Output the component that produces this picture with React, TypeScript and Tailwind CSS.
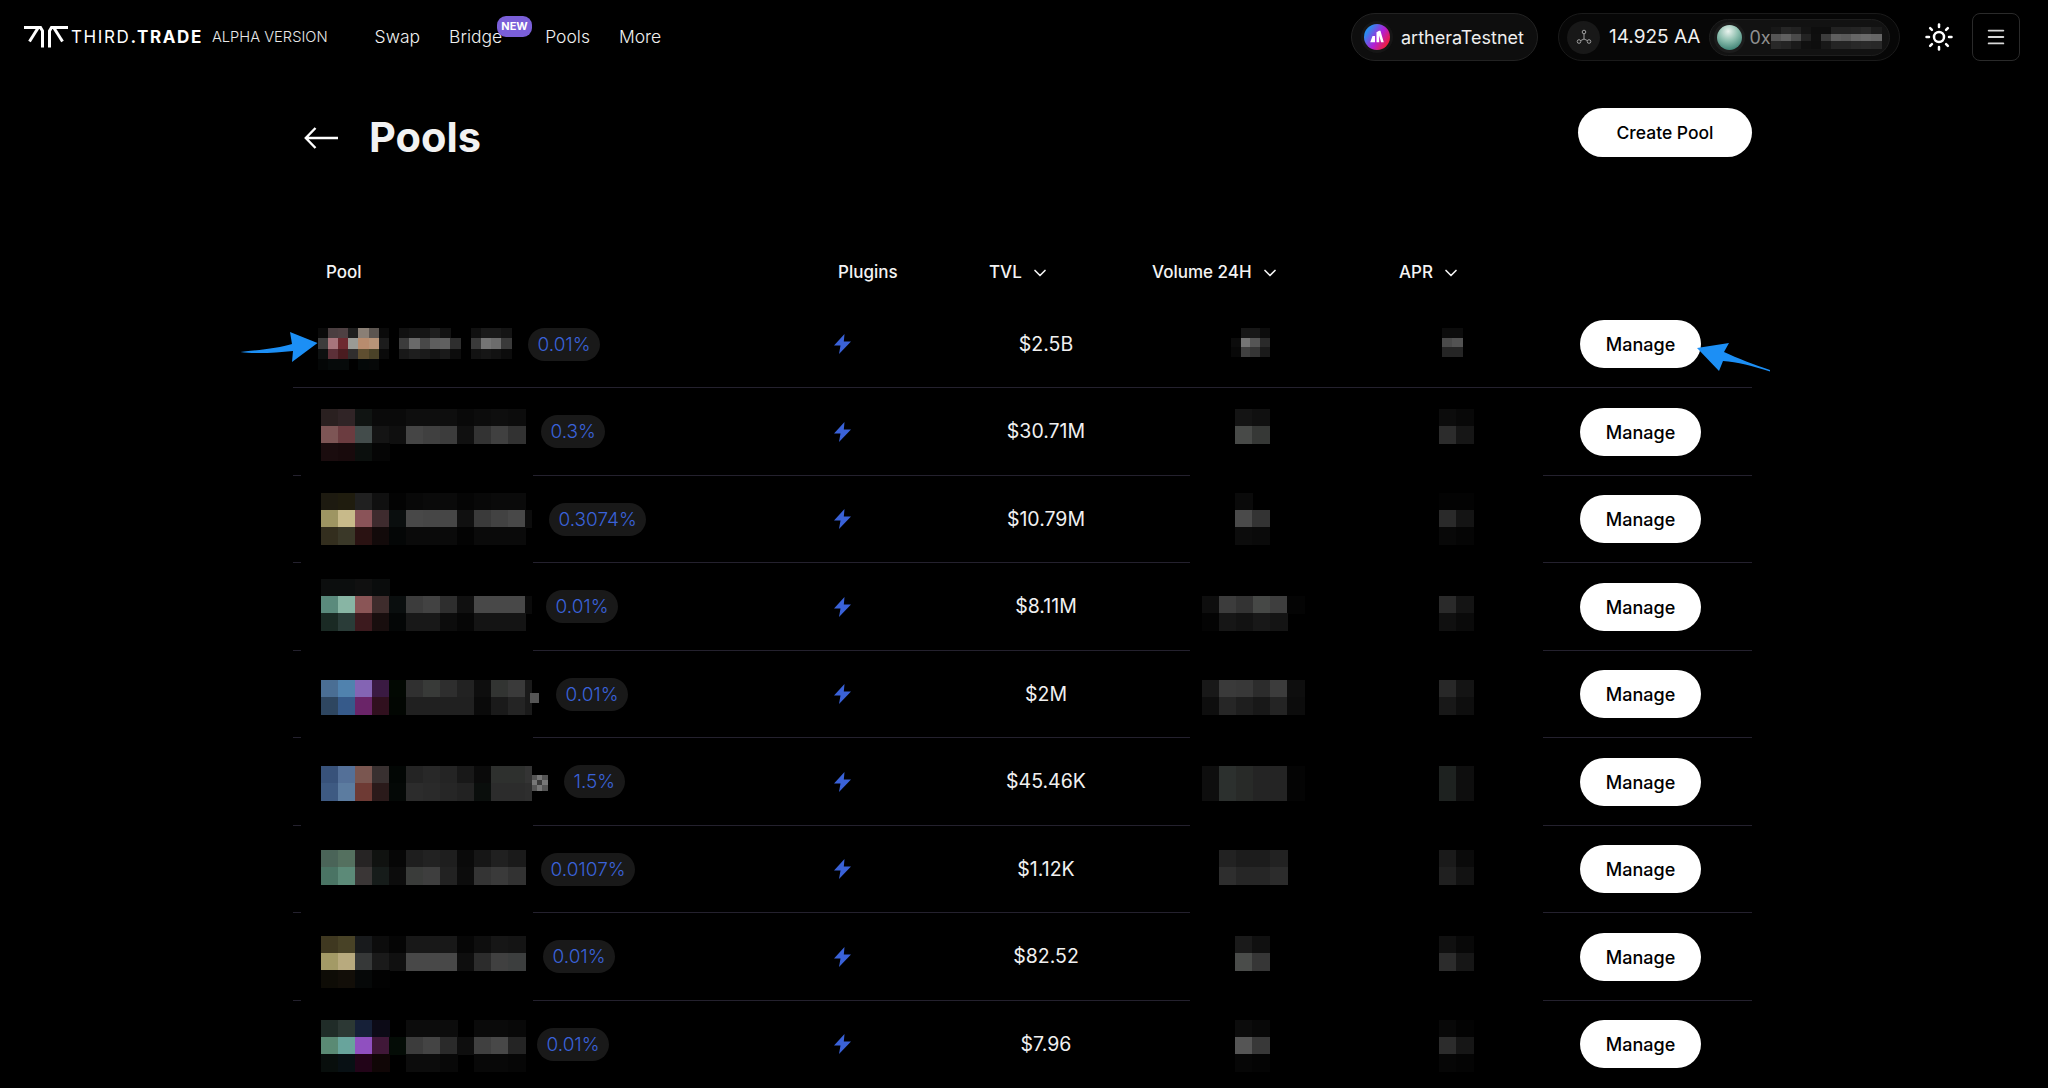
import { ChevronDown, Menu, Sun } from "lucide-react";

type Block = { x: number; y: number; cw: number; ch: number; rows: string[]; maxX?: number };

const P2 = (y: number, rows: string[]): Block => ({ x: 321, y, cw: 17, ch: 17, rows, maxX: 532 });

const rowTops = [301, 388, 476, 563, 651, 738, 826, 913, 1001];

const data = [
  {
    fee: "0.01%", tvl: "$2.5B", poolW: 235,
    pool: [{ x: 317.5, y: 328, cw: 10.2, ch: 10.3, rows: [
      "0a0a0a 4a3e40 4e4042 1e1e1e 8a7f75 5c5550 0a0a0a 000 111111 151515 151515 1e1e1e 121212 000 000 101010 1a1a1a 1a1a1a 141414",
      "3c3c3c a8757c 6e2a30 9a9a95 b88c6e b89478 1c1c1c 000 3c3c3c 6a6a6a 484848 5e5e5e 606060 2e2e2e 000 3a3a3a 757575 6c6c6c 3a3a3a",
      "0d1010 5c3038 4a1c20 302e2e 5e4e30 4a4228 0a0a0a 000 181818 1e1e1e 1a1a1a 141414 1a1a1a 0c0c0c 000 121212 161616 121212 0c0c0c",
      "040606 060a0a 060a0a 000 040808 060808",
    ] }],
    vol: { x: 1231, y: 328, cw: 9.6, ch: 9.5, rows: ["000 171717 171717 0c0c0c", "0c0c0c 757575 555555 2a2a2a", "080808 404040 353535 1a1a1a"] },
    apr: { x: 1442, y: 328, cw: 10, ch: 9.5, rows: ["0c0c0c 0c0c0c", "4a4a4a 525252", "252525 252525"] },
  },
  {
    fee: "0.3%", tvl: "$30.71M", poolW: 248,
    pool: [P2(408, [
      "2a2020 302426 101412 0a0a0a 0a0a0a 0e0e0e 0e0e0e 0e0e0e 090909 0c0c0c 0e0e0e 0c0c0c",
      "7d5555 6b3c40 434c4b 141414 0f0f0f 454545 404040 3c3c3c 101010 333333 404040 323232",
      "1a0c0e 180a0c 0b0f0d 050505",
    ])],
    vol: { x: 1235, y: 408, cw: 17, ch: 17, rows: ["141414 101010", "484a48 363836"] },
    apr: { x: 1439, y: 408, cw: 17, ch: 17, rows: ["0c0c0c 080808", "2c2c2c 161616"] },
  },
  {
    fee: "0.3074%", tvl: "$10.79M", poolW: 256,
    pool: [P2(493, [
      "1d1a10 1f1c0e 202020 101010 030303 080808 0a0a0a 0a0a0a 050505 080808 0a0a0a 0a0a0a",
      "9e9562 c8ba8a 8a5358 3e2b2e 0a0e0e 484848 464646 464646 101010 3a3a3a 424242 484848 0c0c0c",
      "332e1e 3a3828 2a1212 120a0a 040606 0a0a0a 0a0a0a 0a0a0a 030303 0a0a0a 0a0a0a 0a0a0a",
    ])],
    vol: { x: 1235, y: 493, cw: 17, ch: 17, rows: ["0a0a0a 000", "4a4a4a 333333", "0c0c0c 0a0a0a"] },
    apr: { x: 1439, y: 493, cw: 17, ch: 17, rows: ["030303 030303", "2a2a2a 141414", "080808 050505"] },
  },
  {
    fee: "0.01%", tvl: "$8.11M", poolW: 253,
    pool: [P2(578, [
      "0c0e0e 0c0e0e 101010 0a0c0c",
      "5a8a7c 88b5a4 8a5556 3e2c2c 0a0e0e 3c3c3c 424242 2e2e2e 101010 484848 484848 484848 0a0a0a",
      "1a2a24 2a3c38 3c1a1e 180e0e 040606 181818 181818 0c0c0c 060606 141414 141414 141414",
    ])],
    vol: { x: 1202, y: 595, cw: 17, ch: 17, rows: ["0e0e0e 3c3c3c 333333 464846 3e3e3e 040404", "040404 161616 121212 181818 141414 000"] },
    apr: { x: 1439, y: 595, cw: 17, ch: 17, rows: ["2a2a2a 141414", "101010 0a0a0a"] },
  },
  {
    fee: "0.01%", tvl: "$2M", poolW: 263,
    pool: [P2(680, [
      "4a6e94 5082ae 8464b4 3a1a42 020802 303030 383a38 2e2e2e 222222 0e0e0e 323432 3a3a3a 1a1a1a",
      "2e4660 365a8a 6a2468 30101e 020602 202020 202020 202020 202020 0a0a0a 1a1a1a 242424 1a1a1a",
    ]), { x: 530, y: 693, cw: 8, ch: 9, rows: ["555555"] }],
    vol: { x: 1202, y: 680, cw: 17, ch: 17, rows: ["181818 3a3a3a 383838 2c2c2c 3c3c3c 0e0e0e", "0e0e0e 262626 1e1e1e 181818 242424 0c0c0c"] },
    apr: { x: 1439, y: 680, cw: 17, ch: 17, rows: ["282828 141414", "181818 0e0e0e"] },
  },
  {
    fee: "1.5%", tvl: "$45.46K", poolW: 271,
    pool: [P2(765, [
      "38527a 547098 7a5650 383030 020604 242424 282828 242424 181818 0a0a0a 2e302e 2e302e 343434",
      "3e5a82 5c7ca0 6e3a34 2a1a1a 040806 2c2c2c 2a2a2a 262626 222222 0a0e0c 2c2c2c 2c2c2c 2e2e2e",
    ]), { x: 532, y: 774, cw: 5, ch: 5, rows: ["555555 777777 555555", "777777 3a3a3a 777777", "555555 777777 555555"] }],
    vol: { x: 1202, y: 765, cw: 17, ch: 17, rows: ["0e0e0e 2c302e 282a28 242424 242424 040404", "0e0e0e 2c302e 282a28 242424 242424 040404"] },
    apr: { x: 1439, y: 765, cw: 17, ch: 17, rows: ["1e2220 0e0e0e", "1e2220 0e0e0e"] },
  },
  {
    fee: "0.0107%", tvl: "$1.12K", poolW: 248,
    pool: [P2(850, [
      "4a6458 54705f 262424 101210 060606 1e1e1e 222222 1e1e1e 0a0a0a 161616 202020 1a1a1a",
      "4a7464 5c8a78 3a3636 161c1a 0c0c0c 3a3c3a 3e3e3e 222222 0c0c0c 343434 3a3a3a 323232",
    ])],
    vol: { x: 1219, y: 850, cw: 17, ch: 17, rows: ["222222 1c1c1c 1c1c1c 222222", "2e2e2e 262626 262626 2c2c2c"] },
    apr: { x: 1439, y: 850, cw: 17, ch: 17, rows: ["1a1a1a 0a0a0a", "202020 121212"] },
  },
  {
    fee: "0.01%", tvl: "$82.52", poolW: 250,
    pool: [P2(935, [
      "3f3820 484226 181a1c 0c0c0c 050505 181818 181818 181818 060606 0e0e0e 161616 141414",
      "a39a66 b8aa7e 363838 1a1a1a 101010 484848 484848 484848 0e0e0e 2c2c2c 404040 3c3e3e",
      "0e0c06 120e08 060808 020202",
    ])],
    vol: { x: 1235, y: 935, cw: 17, ch: 17, rows: ["1a1a1a 101010", "4a4c4a 363636"] },
    apr: { x: 1439, y: 935, cw: 17, ch: 17, rows: ["101010 080808", "2c2c2c 161616"] },
  },
  {
    fee: "0.01%", tvl: "$7.96", poolW: 244,
    pool: [P2(1020, [
      "202c28 2c3834 162038 0c0a16 000 0c0c0c 0c0c0c 0c0c0c 000 0a0a0a 0a0a0a 080808",
      "5a8a74 68a49c 9050c0 401838 040c06 3c3c3c 444444 2a2a2a 0e0e0e 404040 484848 242424",
      "080e0c 081014 220418 100606 000 0c0c0c 0c0c0c 080808 000 080808 080808 060606",
    ])],
    vol: { x: 1235, y: 1020, cw: 17, ch: 17, rows: ["0c0c0c 080808", "555555 383838", "060606 040404"] },
    apr: { x: 1439, y: 1020, cw: 17, ch: 17, rows: ["080808 030303", "2c2c2c 161616", "060606 040404"] },
  },
];

function Mosaic({ blocks, ox, oy, w, h }: { blocks: Block[]; ox: number; oy: number; w: number; h: number }) {
  return (
    <svg width={w} height={h} className="shrink-0 overflow-visible" shapeRendering="crispEdges">
      {blocks.flatMap((b, bi) =>
        b.rows.flatMap((r, ri) =>
          r.split(" ").map((c, ci) => {
            if (c === "000") return null;
            const left = b.x + ci * b.cw;
            const width = b.maxX ? Math.min(b.cw + 0.5, b.maxX - left) : b.cw + 0.5;
            return (
              <rect
                key={`${bi}-${ri}-${ci}`}
                x={left - ox}
                y={b.y - oy + ri * b.ch}
                width={width}
                height={b.ch + 0.5}
                fill={`#${c}`}
              />
            );
          })
        )
      )}
    </svg>
  );
}

function Bolt() {
  return (
    <svg width="17" height="20" viewBox="0 0 17 20">
      <path d="M10.5 0 L0 11.5 H6.5 L5 20 L17 7.5 H9.8 Z" fill="#3a62d8" />
    </svg>
  );
}

function Logo() {
  return (
    <svg width="44" height="22" viewBox="0 0 44 22" fill="none" stroke="#fff" strokeWidth="3" className="shrink-0">
      <path d="M0 1.5 H16.5 L18.5 5 V21.5" />
      <path d="M14 2 L5.5 15.5" />
      <path d="M44 1.5 H27.5 L25.5 5 V21.5" />
      <path d="M30 2 L38.5 15.5" />
    </svg>
  );
}

function ArtheraIcon() {
  return (
    <div className="w-[32px] h-[32px] rounded-full bg-[#161616] flex items-center justify-center shrink-0">
      <svg width="26" height="26" viewBox="0 0 25 25">
        <defs>
          <linearGradient id="ag" x1="0.05" y1="0.2" x2="0.95" y2="0.8">
            <stop offset="0.1" stopColor="#2a8cf0" />
            <stop offset="0.55" stopColor="#b020d8" />
            <stop offset="0.95" stopColor="#f01e3c" />
          </linearGradient>
        </defs>
        <circle cx="12.5" cy="12.5" r="12.5" fill="url(#ag)" />
        <path d="M6 17.5 L8.2 11.5 H10.6 V17.5 Z M12 17.5 V8 L14.5 6.5 H15.8 L19 17.5 H16.4 L14.6 11 V17.5 Z" fill="#fff" />
      </svg>
    </div>
  );
}

function NetIcon() {
  return (
    <div className="w-[33px] h-[33px] rounded-full bg-[#181818] flex items-center justify-center shrink-0">
      <svg width="16" height="16" viewBox="0 0 16 16" fill="none" stroke="#a0a0a0" strokeWidth="1">
        <circle cx="8" cy="3" r="1.8" />
        <circle cx="3" cy="12.5" r="1.8" />
        <circle cx="13" cy="12.5" r="1.8" />
        <path d="M8 5 V10 M8 10 L4.6 11.6 M8 10 L11.4 11.6" />
      </svg>
    </div>
  );
}

function Sphere() {
  return (
    <div className="w-[31px] h-[31px] rounded-full bg-[#1c1c1c] flex items-center justify-center shrink-0">
      <svg width="25" height="25" viewBox="0 0 25 25">
        <defs>
          <radialGradient id="sp" cx="0.45" cy="0.25" r="0.85">
            <stop offset="0" stopColor="#eaf3ee" />
            <stop offset="0.45" stopColor="#8fc0b0" />
            <stop offset="1" stopColor="#2b7467" />
          </radialGradient>
        </defs>
        <circle cx="12.5" cy="12.5" r="12.5" fill="url(#sp)" />
      </svg>
    </div>
  );
}

function Sep({ full }: { full?: boolean }) {
  if (full) return <div className="h-px bg-[#24212e]" />;
  return (
    <div className="flex h-px">
      <div className="w-[8px] bg-[#24212e]" />
      <div className="w-[232px]" />
      <div className="w-[657px] bg-[#24212e]" />
      <div className="w-[353px]" />
      <div className="flex-1 bg-[#24212e]" />
    </div>
  );
}

function HeadSort({ label }: { label: string }) {
  return (
    <div className="flex items-center gap-[8px]">
      <span>{label}</span>
      <ChevronDown size={20} strokeWidth={2} />
    </div>
  );
}

export default function App() {
  return (
    <div className="relative h-screen overflow-hidden bg-black text-white font-[family-name:Inter,sans-serif]">
      <header className="h-[74px] flex items-center pl-[24px] pr-[28px]">
        <Logo />
        <div className="ml-[3px] text-[17px] leading-none tracking-[1.6px] whitespace-nowrap">
          <span className="font-normal">THIRD</span>
          <span className="font-bold">.TRADE</span>
        </div>
        <span className="ml-[9px] text-[14.7px] font-light text-[#e8e8e8] whitespace-nowrap">ALPHA VERSION</span>
        <nav className="ml-[47px] mt-[1px] flex items-center gap-[29px] text-[17.5px] font-light text-[#f0f0f0]">
          <span>Swap</span>
          <span className="relative mr-[14px]">
            Bridge
            <span className="absolute left-[48px] top-[-8px] w-[35px] h-[21px] rounded-[9px] bg-[#7a5fd8] text-white text-[11px] font-bold leading-[21px] text-center">NEW</span>
          </span>
          <span>Pools</span>
          <span>More</span>
        </nav>
        <div className="ml-auto flex items-center">
          <div className="w-[187px] h-[48px] rounded-full bg-[#0e0e0e] border border-[#222222] flex items-center pl-[9px] gap-[8px]">
            <ArtheraIcon />
            <span className="text-[18px] text-[#eeeeee]">artheraTestnet</span>
          </div>
          <div className="ml-[20px] w-[342px] h-[48px] rounded-full bg-[#070707] border border-[#1a1a1a] flex items-center pl-[8px]">
            <NetIcon />
            <span className="ml-[9px] mt-[1px] text-[19px] text-[#f0f0f0] whitespace-nowrap">14.925 AA</span>
            <div className="ml-[9px] w-[181px] h-[37px] rounded-full bg-[#121212] border border-[#1e1e1e] flex items-center pl-[4px]">
              <Sphere />
              <span className="ml-[4px] text-[18px] text-[#8f8f8f]">0x</span>
              <Mosaic
                ox={0}
                oy={0}
                w={105}
                h={21}
                blocks={[{ x: 0, y: 0, cw: 10, ch: 7, rows: [
                  "181818 262626 222222 141414 0e0e0e 0e0e0e 222222 222222 242424 282828 1c1c1c",
                  "555555 606060 4a4a4a 222222 0f0f0f 3c3c3c 5e5e5e 5a5a5a 666666 6a6a6a 666666",
                  "282828 242424 1a1a1a 101010 0e0e0e 181818 242424 242424 282828 2a2a2a 282828",
                ] }]}
              />
            </div>
          </div>
          <Sun size={30} strokeWidth={2} className="ml-[24px] text-white" />
          <div className="ml-[18px] w-[48px] h-[48px] rounded-[8px] border border-[#2a2a2a] flex items-center justify-center">
            <Menu size={22} strokeWidth={2} className="text-[#d8d8d8]" />
          </div>
        </div>
      </header>

      <main className="ml-[293px] w-[1459px] pt-[34px]">
        <div className="flex justify-between items-start">
          <div className="h-[60px] flex items-center pl-[11px]">
            <svg width="34" height="22" viewBox="0 0 34 22" fill="none" stroke="#ffffff" strokeWidth="2.4">
              <path d="M34 11 H2 M11.5 1 L1.8 11 L11.5 21" />
            </svg>
            <h1 className="ml-[31px] text-[41.5px] font-bold leading-none text-[#f2f2f2]">Pools</h1>
          </div>
          <button className="w-[174px] h-[49px] pt-[1px] rounded-full bg-white text-black text-[17.5px] font-medium">Create Pool</button>
        </div>

        <div className="mt-[85px] h-[40px] mb-[8px] grid grid-cols-[545px_151px_163px_247px_181px] items-center text-[17px] font-medium text-[#f4f4f4]">
          <div className="pl-[33px]">Pool</div>
          <div>Plugins</div>
          <HeadSort label="TVL" />
          <HeadSort label="Volume 24H" />
          <HeadSort label="APR" />
        </div>

        {data.map((d, i) => (
          <div key={i}>
            <div className={`grid grid-cols-[537px_150px_132px_250px_218px_1fr] items-center ${i % 2 === 0 ? "h-[86px]" : "h-[87px]"}`}>
              <div className="flex items-center">
                <Mosaic blocks={d.pool as Block[]} ox={293} oy={rowTops[i]} w={d.poolW} h={86} />
                <span className="h-[33px] px-[9.5px] rounded-full bg-[#191919] text-[#3a62d8] text-[19px] font-light leading-[33px] whitespace-nowrap">{d.fee}</span>
              </div>
              <div className="pl-[4px] flex items-center"><Bolt /></div>
              <div className="pt-[1px] text-center text-[19.5px] text-[#f0f0f0]">{d.tvl}</div>
              <Mosaic blocks={[d.vol]} ox={1112} oy={rowTops[i]} w={250} h={86} />
              <Mosaic blocks={[d.apr]} ox={1362} oy={rowTops[i]} w={218} h={86} />
              <div>
                <button className="w-[121px] h-[48px] pt-[1px] rounded-full bg-white text-black text-[18px] font-medium">Manage</button>
              </div>
            </div>
            {i < data.length - 1 && <Sep full={i === 0} />}
          </div>
        ))}
      </main>

      <svg className="absolute left-[240px] top-[330px]" width="80" height="34" viewBox="0 0 80 34">
        <path d="M0.5 22 C 20 20 40 18 52 14 L50 2 L77.5 13 L52 32 L53 21 C 35 23 15 24 0.5 22 Z" fill="#1c8ff5" />
      </svg>
      <svg className="absolute left-[1695px] top-[340px]" width="78" height="34" viewBox="0 0 78 34">
        <path d="M2 8 L34 3 L29 12 C 42 18 60 25 75 30 L75 31.5 C 58 26 42 22 28 21 L24 31 Z" fill="#1c8ff5" />
      </svg>
    </div>
  );
}
